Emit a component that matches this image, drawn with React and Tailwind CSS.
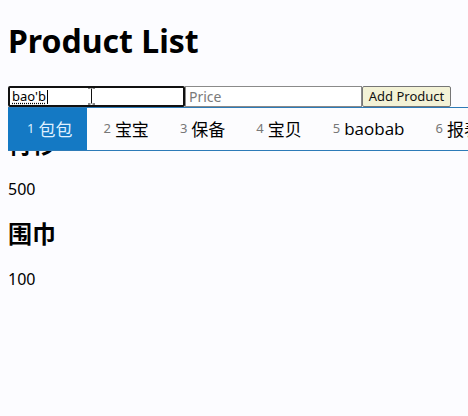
import { useState } from 'react'

const products = [
  { name: '衬衫', price: 500 },
  { name: '围巾', price: 100 },
]

const candidates = ['包包', '宝宝', '保备', '宝贝', 'baobab', '报表']

const App = () => {
  const [name, setName] = useState("bao'b")
  const [price, setPrice] = useState('')

  return (
    <div
      className="relative min-h-[416px] overflow-hidden bg-[#fcfcff] px-2 text-black"
      style={{ fontFamily: '"Noto Sans", "Noto Sans CJK SC", sans-serif' }}
    >
      <h1 className="pt-[22px] text-[32px] font-bold leading-[37px]">Product List</h1>

      {/* Form */}
      <div className="mt-[27px] flex h-[21px] items-stretch">
        <div className="flex w-[177px] items-center rounded-[2px] border-2 border-[#111] bg-white px-[2px]">
          <span className="text-[13px] leading-none underline decoration-dotted underline-offset-2">{name}</span>
          <span className="ml-px h-[14px] w-px bg-black"></span>
        </div>
        <input
          value={price}
          onChange={(e) => setPrice(e.target.value)}
          placeholder="Price"
          className="w-[177px] border border-[#8a8a8a] bg-white px-[3px] text-[14px] leading-none outline-none placeholder:text-[#7a7a7a]"
        />
        <button className="w-[89px] rounded-[2px] border border-[#767676] bg-[#f3f2d6] text-[13px] leading-none text-[#111]">
          Add Product
        </button>
      </div>

      {/* Products */}
      <div className="mt-[22px]">
        {products.map((p) => (
          <div key={p.name}>
            <h2 className="text-[24px] font-bold leading-[30px]">{p.name}</h2>
            <p className="mt-[20px] mb-[20px] text-[16px] leading-[20px]">{p.price}</p>
          </div>
        ))}
      </div>

      {/* IME candidate window */}
      <div className="absolute left-2 top-[107px] flex h-[44px] w-[520px] items-stretch border-y border-[#2d7bb8] bg-[#fcfcfe]">
        {candidates.map((c, i) => (
          <div
            key={c}
            className={
              i === 0
                ? 'flex items-center bg-[#1479c4] pl-[19px] pr-[15px] text-[#dff0ff]'
                : 'flex items-center pl-[16px] pr-[15px] text-black'
            }
          >
            <span className={i === 0 ? 'mr-[4px] text-[13px] text-[#dff0ff]' : 'mr-[4px] text-[13px] text-[#777]'}>
              {i + 1}
            </span>
            <span
              className="text-[17px]"
              style={{ fontFamily: i === 4 ? '"Open Sans", "Noto Sans", sans-serif' : '"Noto Sans CJK SC", sans-serif' }}
            >
              {c}
            </span>
          </div>
        ))}
      </div>

      {/* I-beam mouse cursor */}
      <svg className="absolute left-[87px] top-[87px]" width="9" height="18" viewBox="0 0 9 18">
        <path d="M1 1h2.5M5.5 1H8M4.5 1.5v15M1 17h2.5M5.5 17H8" stroke="#111" strokeWidth="1" fill="none" />
      </svg>
    </div>
  )
}

export default App
